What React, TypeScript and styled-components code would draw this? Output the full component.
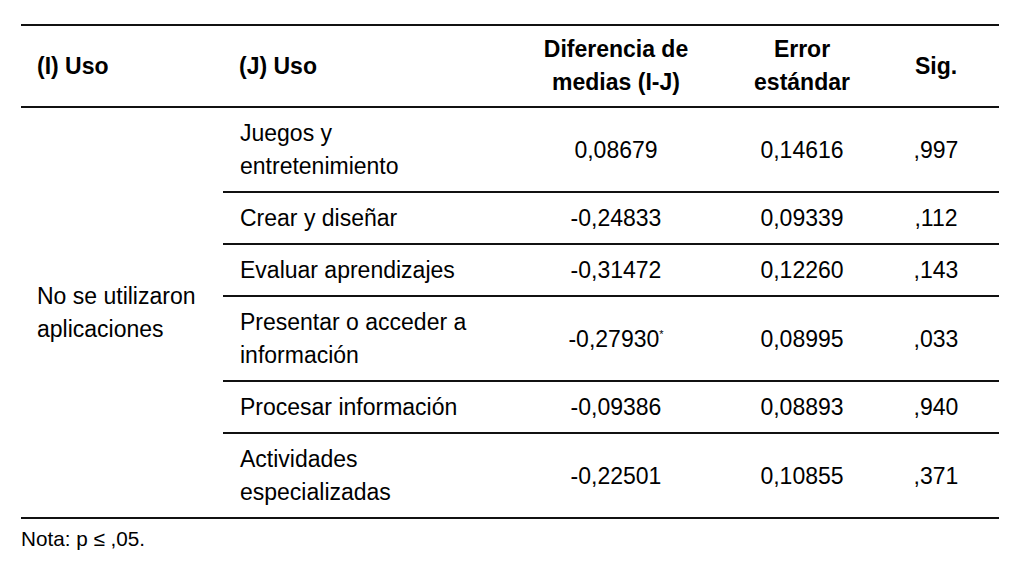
import styled, { createGlobalStyle } from "styled-components";

const GlobalStyle = createGlobalStyle`
  html, body {
    margin: 0;
    padding: 0;
    background: #ffffff;
  }
  body {
    font-family: "Liberation Sans", Arial, sans-serif;
    color: #000000;
  }
`

const Page = styled.div`
  width: 1026px;
  height: 570px;
  box-sizing: border-box;
  padding: 24px 0 0 21px;
  background: #ffffff;
`

const Table = styled.table`
  width: 978px;
  border-collapse: collapse;
  table-layout: fixed;
  font-size: 23px;
  line-height: 33px;
`

const HeadRow = styled.tr`
  border-top: 2px solid #111;
  border-bottom: 2px solid #111;
`

const HeadCell = styled.th<{ $align?: "left" | "center" }>`
  font-weight: bold;
  text-align: ${(p) => p.$align || "center"};
  vertical-align: middle;
  padding: 7px ${(p) => (p.$align === "left" ? "0 7px 16px" : "4px")};
`

const Cell = styled.td<{ $align?: "left" | "center" }>`
  text-align: ${(p) => p.$align || "center"};
  vertical-align: middle;
  padding: 9px ${(p) => (p.$align === "left" ? "21px 8px 17px" : "4px 8px")};
  border-bottom: 2px solid #111;
`

const GroupCell = styled.td`
  vertical-align: middle;
  text-align: left;
  padding: 0 10px 0 16px;
  border-bottom: 2px solid #111;
`

const Star = styled.sup`
  font-size: 11px;
  line-height: 0;
  vertical-align: 9px;
`

const Note = styled.p`
  margin: 6px 0 0 0;
  font-size: 20.7px;
  line-height: 28px;
`

type Row = {
  uso: string
  diff: string
  star?: boolean
  err: string
  sig: string
}

const rows: Row[] = [
  { uso: "Juegos y entretenimiento", diff: "0,08679", err: "0,14616", sig: ",997" },
  { uso: "Crear y diseñar", diff: "-0,24833", err: "0,09339", sig: ",112" },
  { uso: "Evaluar aprendizajes", diff: "-0,31472", err: "0,12260", sig: ",143" },
  { uso: "Presentar o acceder a información", diff: "-0,27930", star: true, err: "0,08995", sig: ",033" },
  { uso: "Procesar información", diff: "-0,09386", err: "0,08893", sig: ",940" },
  { uso: "Actividades especializadas", diff: "-0,22501", err: "0,10855", sig: ",371" },
]

export default function App() {
  return (
    <Page>
      <GlobalStyle />
      <Table>
        <colgroup>
          <col style={{ width: 202 }} />
          <col style={{ width: 278 }} />
          <col style={{ width: 230 }} />
          <col style={{ width: 142 }} />
          <col style={{ width: 126 }} />
        </colgroup>
        <thead>
          <HeadRow>
            <HeadCell $align="left">(I) Uso</HeadCell>
            <HeadCell $align="left">(J) Uso</HeadCell>
            <HeadCell>Diferencia de<br />medias (I-J)</HeadCell>
            <HeadCell>Error<br />estándar</HeadCell>
            <HeadCell>Sig.</HeadCell>
          </HeadRow>
        </thead>
        <tbody>
          {rows.map((r, i) => (
            <tr key={r.uso}>
              {i === 0 && (
                <GroupCell rowSpan={rows.length}>No se utilizaron aplicaciones</GroupCell>
              )}
              <Cell $align="left">{r.uso}</Cell>
              <Cell>
                {r.diff}
                {r.star && <Star>*</Star>}
              </Cell>
              <Cell>{r.err}</Cell>
              <Cell>{r.sig}</Cell>
            </tr>
          ))}
        </tbody>
      </Table>
      <Note>Nota: p ≤ ,05.</Note>
    </Page>
  )
}
